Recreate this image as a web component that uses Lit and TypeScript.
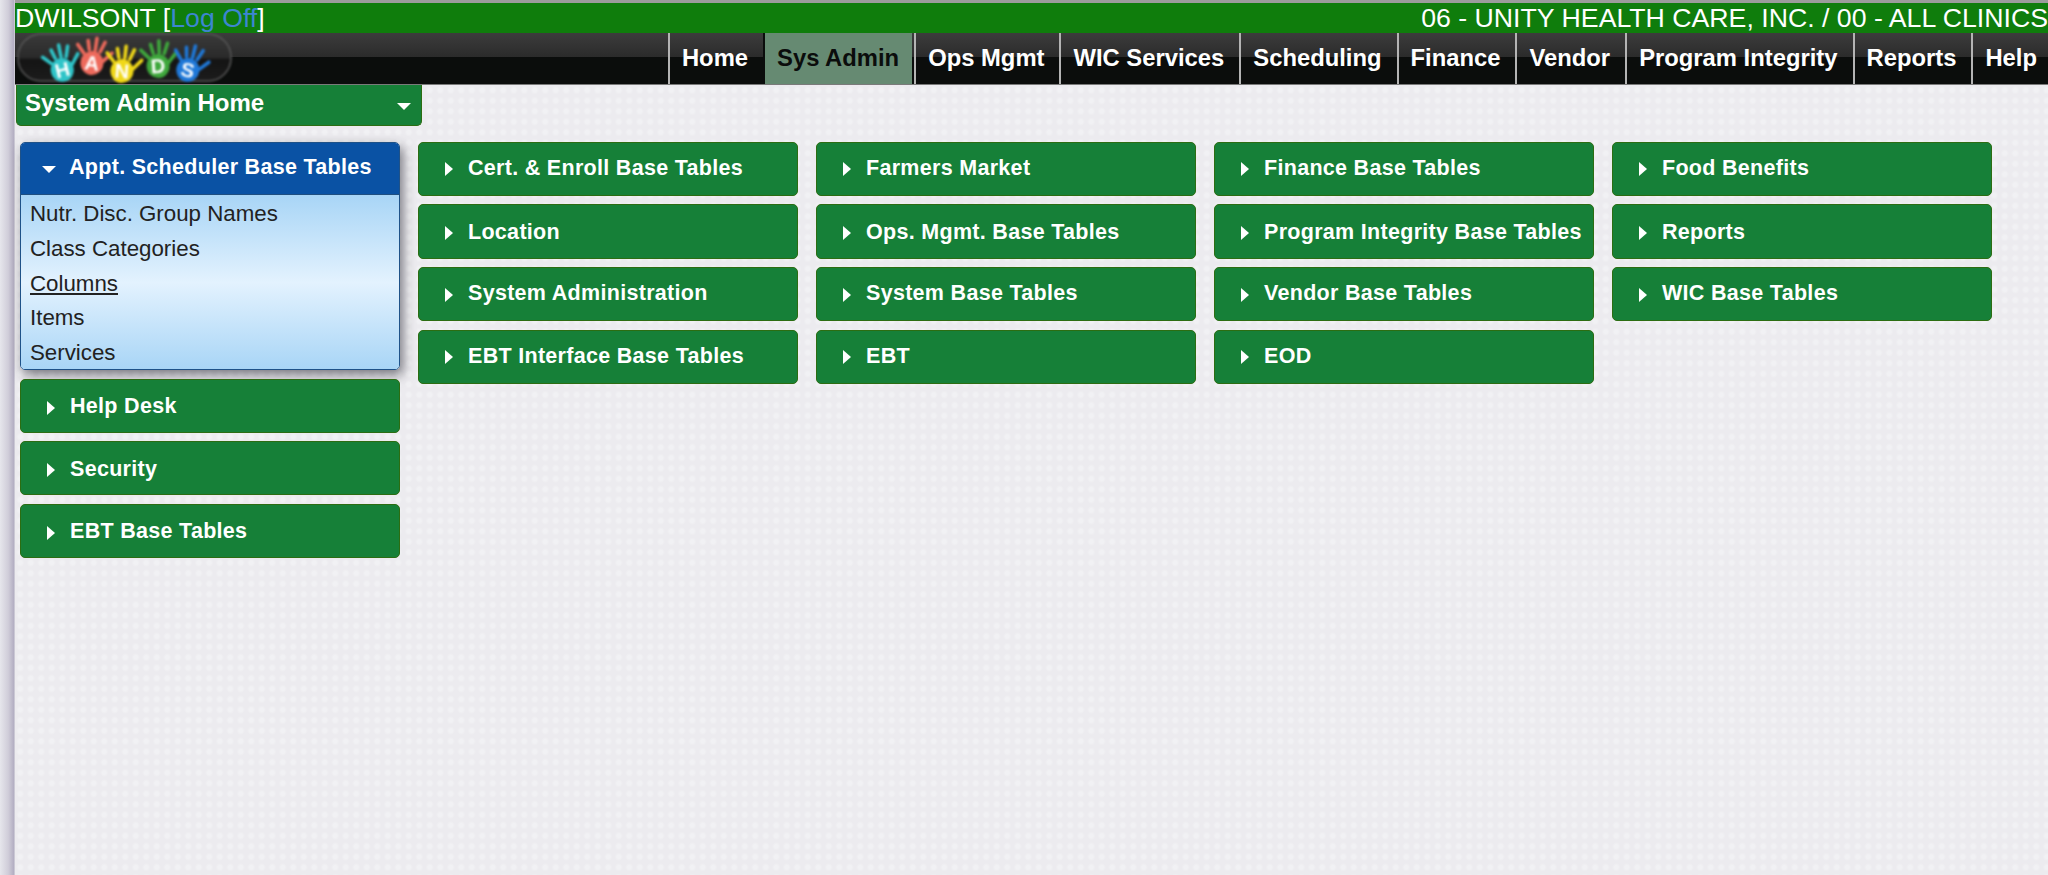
import { LitElement, html, css, svg } from "lit";
import { customElement } from "lit/decorators.js";

const NAV = ["Home", "Sys Admin", "Ops Mgmt", "WIC Services", "Scheduling", "Finance", "Vendor", "Program Integrity", "Reports", "Help"];
const COLS: string[][] = [
  ["Cert. & Enroll Base Tables", "Location", "System Administration", "EBT Interface Base Tables"],
  ["Farmers Market", "Ops. Mgmt. Base Tables", "System Base Tables", "EBT"],
  ["Finance Base Tables", "Program Integrity Base Tables", "Vendor Base Tables", "EOD"],
  ["Food Benefits", "Reports", "WIC Base Tables"],
];
const SUB = ["Nutr. Disc. Group Names", "Class Categories", "Columns", "Items", "Services"];
const HANDS = [
  { x: 62, y: 70, c: "#2fc4c8", r: -14, l: "H" },
  { x: 92, y: 63, c: "#ee6a5c", r: 6, l: "A" },
  { x: 122, y: 71, c: "#f0d818", r: 4, l: "N" },
  { x: 158, y: 66, c: "#3fa83c", r: -4, l: "D" },
  { x: 188, y: 70, c: "#1f78d8", r: 12, l: "S" },
];

function hand(h: { x: number; y: number; c: string; r: number; l: string }) {
  const cx = h.x - 17;
  const cy = h.y - 34;
  return svg`<g transform="translate(${cx} ${cy}) rotate(${h.r})">
    <g stroke=${h.c} stroke-width="3.6" stroke-linecap="round">
      <path d="M-9 -8 L-16 -16" />
      <path d="M-4 -12 L-6 -21" />
      <path d="M2 -12 L2.5 -24" />
      <path d="M7 -11 L11 -21" />
      <path d="M10 -1 L19 -11" />
    </g>
    <ellipse cx="0" cy="1" rx="11.5" ry="12" fill=${h.c} />
    <text x="0" y="8" text-anchor="middle" class="hl">${h.l}</text>
  </g>`;
}

@customElement("app-root")
export class AppRoot extends LitElement {
  static styles = css`
    :host { display: block; width: 2048px; height: 875px; overflow: hidden; background: #eeeef0; font-family: "Liberation Sans", Arial, sans-serif; }
    .shell { display: flex; height: 875px; }
    .strip { width: 15px; flex: none; background: linear-gradient(90deg, #e6e6ec 0%, #d0cdd9 55%, #b3aec2 92%, #dcdce2 100%); }
    .main { flex: 1; min-width: 0; display: flex; flex-direction: column; }
    .edge { height: 3px; background: #9c9c9c; flex: none; }
    .top { height: 30px; flex: none; background: #0f7d0c; color: #fff; display: flex; justify-content: space-between; align-items: center; font-size: 26.7px; line-height: 30px; box-sizing: border-box; white-space: nowrap; overflow: hidden; }
    .top a { color: #3d86d0; text-decoration: none; }
    .nav { height: 51px; flex: none; display: flex; align-items: stretch; justify-content: space-between; background: linear-gradient(180deg, #3c3c3c 0%, #2b2b2b 47%, #0b0d0c 48%, #0b0d0c 100%); border-bottom: 1px solid #7a7a7a; box-sizing: content-box; }
    .logo { width: 216px; height: 50px; margin-left: 2px; flex: none; filter: blur(0.8px); }
    .logo .hl { font: bold 20px "Liberation Sans", Arial, sans-serif; fill: #fff; }
    .items { display: flex; }
    .item { display: flex; align-items: center; padding: 0 15px 2px 12px; border-left: 2px solid #b4b4b4; color: #fff; font-size: 23.8px; font-weight: bold; white-space: nowrap; }
    .item:last-child { padding-right: 11px; }
    .item.on { background: #668a72; color: #0b0d0c; border-left-color: #0b0d0c; margin-right: 2px; padding-right: 13px; }
    .page { flex: 1; background-color: #ecebef; background-image: radial-gradient(#f1f1f4 2px, transparent 4px); background-size: 10.5px 10.5px; }
    .home { width: 406px; height: 41px; margin-left: 1px; box-sizing: border-box; background: #168038; border: 1px solid #2c6d12; border-top: 0; border-radius: 0 0 5px 5px; display: flex; justify-content: space-between; align-items: center; padding: 0 10px 5px 8px; color: #fff; font-size: 24px; font-weight: bold; }
    .down { width: 0; height: 0; border-left: 7px solid transparent; border-right: 7px solid transparent; border-top: 7px solid #fff; }
    .home .down { margin-top: 7px; }
    .grid { display: flex; gap: 18px; margin: 16px 0 0 5px; align-items: flex-start; }
    .col { width: 380px; flex: none; display: flex; flex-direction: column; gap: 8.5px; }
    .btn { height: 54px; box-sizing: border-box; background: #168038; border: 1.5px solid #2c6d12; border-radius: 5px; display: flex; align-items: center; color: #fff; font-size: 21.5px; font-weight: bold; letter-spacing: 0.3px; padding: 0 0 1px 26px; white-space: nowrap; }
    .col.r .btn:nth-child(1) { padding-bottom: 2px; }
    .col.r .btn:nth-child(2) { height: 55px; margin-top: -1px; padding-top: 2px; padding-bottom: 0; }
    .col.l .btn { padding-top: 2px; padding-bottom: 0; }
    .right { width: 0; height: 0; border-top: 7px solid transparent; border-bottom: 7px solid transparent; border-left: 8px solid #fff; margin: 2px 15px 0 0; flex: none; }
    .acc { border-radius: 5px; box-shadow: 3px 5px 12px rgba(40, 40, 50, 0.6); border: 1.5px solid #1f5288; overflow: hidden; box-sizing: border-box; height: 228px; }
    .acc .head { height: 52px; background: #0a52a4; border-bottom: 1.5px solid #1f4f80; box-sizing: border-box; display: flex; align-items: center; padding: 0 0 2px 21px; color: #fff; font-size: 21.5px; font-weight: bold; letter-spacing: 0.3px; white-space: nowrap; }
    .acc .head .down { margin: 4px 13px 0 0; flex: none; }
    .acc .body { height: 175px; box-sizing: border-box; padding: 2px 0 0 9px; background: linear-gradient(180deg, #a8d5f6 0%, #e3f2fe 50%, #a8d5f6 100%); color: #222; font-size: 22.3px; display: flex; flex-direction: column; }
    .acc .row { height: 34.8px; line-height: 34.8px; white-space: nowrap; }
    .acc .row.u { text-decoration: underline; }
  `;

  render() {
    return html`<div class="shell">
      <div class="strip"></div>
      <div class="main">
        <div class="edge"></div>
        <div class="top">
          <span>DWILSONT [<a>Log Off</a>]</span>
          <span>06 - UNITY HEALTH CARE, INC. / 00 - ALL CLINICS</span>
        </div>
        <div class="nav">
          <svg class="logo" viewBox="0 0 216 50">
            <defs>
              <linearGradient id="pill" x1="0" y1="0" x2="0" y2="1">
                <stop offset="0" stop-color="#3a3a3a" />
                <stop offset="0.5" stop-color="#2a2a2a" />
                <stop offset="0.55" stop-color="#141414" />
                <stop offset="1" stop-color="#1c1c1c" />
              </linearGradient>
            </defs>
            <rect x="1" y="1" width="213" height="47" rx="23" fill="url(#pill)" stroke="#585858" stroke-width="1.5" />
            ${HANDS.map(hand)}
          </svg>
          <div class="items">
            ${NAV.map((n, i) => html`<div class="item ${i === 1 ? "on" : ""}">${n}</div>`)}
          </div>
        </div>
        <div class="page">
          <div class="home"><span>System Admin Home</span><span class="down"></span></div>
          <div class="grid">
            <div class="col l">
              <div class="acc">
                <div class="head"><span class="down"></span>Appt. Scheduler Base Tables</div>
                <div class="body">
                  ${SUB.map((s) => html`<div class="row ${s === "Columns" ? "u" : ""}">${s}</div>`)}
                </div>
              </div>
              ${["Help Desk", "Security", "EBT Base Tables"].map((t) => html`<div class="btn"><span class="right"></span>${t}</div>`)}
            </div>
            ${COLS.map((c) => html`<div class="col r">${c.map((t) => html`<div class="btn"><span class="right"></span>${t}</div>`)}</div>`)}
          </div>
        </div>
      </div>
    </div>`;
  }
}
